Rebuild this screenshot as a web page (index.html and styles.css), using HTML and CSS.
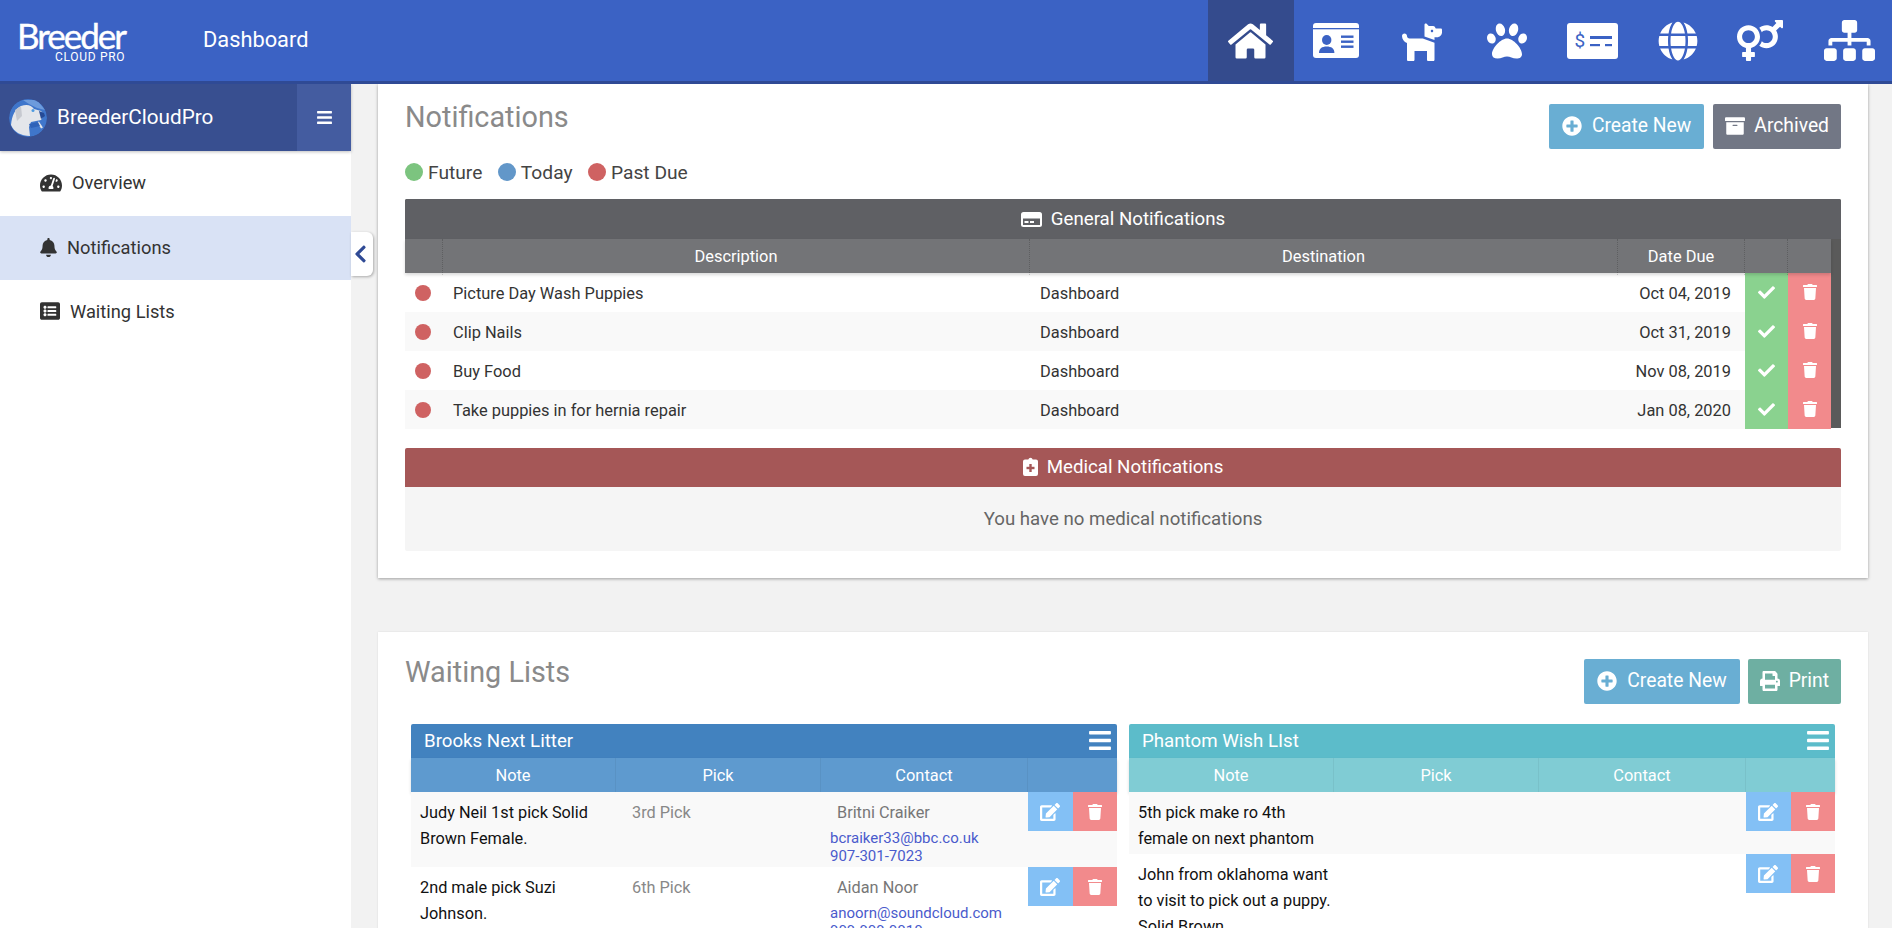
FILE: index.html
```html
<!DOCTYPE html>
<html lang="en">
<head>
<meta charset="utf-8">
<title>Breeder Cloud Pro - Dashboard</title>
<link rel="stylesheet" href="styles.css">
</head>
<body>
<svg class="sprite" aria-hidden="true">
  <symbol id="i-home" viewBox="0 0 576 512"><path d="M280.37 148.26L96 300.11V464a16 16 0 0 0 16 16l112.06-.29a16 16 0 0 0 15.92-16V368a16 16 0 0 1 16-16h64a16 16 0 0 1 16 16v95.64a16 16 0 0 0 16 16.05L464 480a16 16 0 0 0 16-16V300L295.67 148.26a12.19 12.19 0 0 0-15.3 0zM571.6 251.47L488 182.56V44.05a12 12 0 0 0-12-12h-56a12 12 0 0 0-12 12v72.61L318.47 43a48 48 0 0 0-61 0L4.34 251.47a12 12 0 0 0-1.6 16.9l25.5 31A12 12 0 0 0 45.15 301l235.22-193.74a12.19 12.19 0 0 1 15.3 0L530.9 301a12 12 0 0 0 16.9-1.6l25.5-31a12 12 0 0 0-1.7-16.93z"/></symbol>
  <symbol id="i-dog" viewBox="0 0 512 512"><path d="M496 96h-64l-7.16-14.31A32 32 0 0 0 396.22 64H342.6l-27.28-27.28C305.23 26.63 288 33.77 288 48.03v149.84l128 45.71V208h32c35.35 0 64-28.65 64-64v-32c0-8.84-7.16-16-16-16zm-112 48c-8.84 0-16-7.16-16-16s7.16-16 16-16 16 7.16 16 16-7.16 16-16 16zM96 224c-17.64 0-32-14.36-32-32 0-17.67-14.33-32-32-32S0 174.33 0 192c0 41.66 26.83 76.85 64 90.1V496c0 8.84 7.16 16 16 16h64c8.84 0 16-7.16 16-16V384h160v112c0 8.84 7.16 16 16 16h64c8.84 0 16-7.16 16-16V277.55L266.05 224H96z"/></symbol>
  <symbol id="i-paw" viewBox="0 0 512 512"><path d="M256 224c-79.41 0-192 122.76-192 200.25 0 34.9 26.81 55.75 71.74 55.75 48.84 0 81.09-25.08 120.26-25.08 39.51 0 71.85 25.08 120.26 25.08 44.93 0 71.74-20.85 71.74-55.75C448 346.76 335.41 224 256 224zm-147.28-12.61c-10.4-34.65-42.44-57.09-71.56-50.13-29.12 6.96-44.29 40.69-33.89 75.34 10.4 34.65 42.44 57.09 71.56 50.13 29.12-6.96 44.29-40.69 33.89-75.34zm84.72-20.78c30.94-8.14 46.42-49.94 34.58-93.36s-46.52-72.01-77.46-63.87-46.42 49.94-34.58 93.36c11.84 43.42 46.52 72.02 77.46 63.87zm281.39-29.34c-29.12-6.96-61.15 15.48-71.56 50.13-10.4 34.65 4.77 68.38 33.89 75.34 29.12 6.96 61.15-15.48 71.56-50.13 10.4-34.65-4.77-68.38-33.89-75.34zm-156.27 29.34c30.94 8.14 65.62-20.45 77.46-63.87 11.84-43.42-3.64-85.21-34.58-93.36s-65.62 20.45-77.46 63.87c-11.84 43.42 3.64 85.22 34.58 93.36z"/></symbol>
  <symbol id="i-globe" viewBox="0 0 496 512"><path d="M336.5 160C322 70.7 287.8 8 248 8s-74 62.7-88.5 152h177zM152 256c0 22.2 1.2 43.5 3.3 64h185.3c2.1-20.5 3.3-41.8 3.3-64s-1.2-43.5-3.3-64H155.3c-2.1 20.5-3.3 41.8-3.3 64zm324.7-96c-28.6-67.9-86.5-120.4-158-141.6 24.4 33.8 41.2 84.7 50 141.6h108zM177.2 18.4C105.8 39.6 47.8 92.1 19.3 160h108c8.7-56.9 25.5-107.8 49.9-141.6zM487.4 192H372.7c2.1 21 3.3 42.5 3.3 64s-1.2 43-3.3 64h114.6c5.5-20.5 8.6-41.8 8.6-64s-3.1-43.5-8.5-64zM120 256c0-21.5 1.2-43 3.3-64H8.6C3.2 212.5 0 233.8 0 256s3.2 43.5 8.6 64h114.6c-2-21-3.2-42.5-3.2-64zm39.5 96c14.5 89.3 48.7 152 88.5 152s74-62.7 88.5-152h-177zm159.3 141.6c71.4-21.2 129.4-73.7 158-141.6h-108c-8.8 56.9-25.6 107.8-50 141.6zM19.3 352c28.6 67.9 86.5 120.4 158 141.6-24.4-33.8-41.2-84.7-50-141.6h-108z"/></symbol>
  <symbol id="i-gender" viewBox="0 0 576 512"><path d="M564 0h-79c-10.7 0-16 12.9-8.5 20.5l16.9 16.9-48.7 48.7C422.5 72.1 396.2 64 368 64c-33.7 0-64.6 11.6-89.2 30.9 14 16.7 25 36 32.1 57.1 14.5-14.8 34.7-24 57.1-24 44.1 0 80 35.9 80 80s-35.9 80-80 80c-22.3 0-42.6-9.2-57.1-24-7.1 21.1-18 40.4-32.1 57.1 24.5 19.4 55.5 30.9 89.2 30.9 79.5 0 144-64.5 144-144 0-28.2-8.1-54.5-22.1-76.7l48.7-48.7 16.9 16.9c2.4 2.4 5.4 3.5 8.4 3.5 6.2 0 12.1-4.8 12.1-12V12c0-6.6-5.4-12-12-12zM144 64C64.5 64 0 128.5 0 208c0 68.5 47.9 125.9 112 140.4V400H76c-6.6 0-12 5.4-12 12v40c0 6.6 5.4 12 12 12h36v36c0 6.6 5.4 12 12 12h40c6.6 0 12-5.4 12-12v-36h36c6.6 0 12-5.4 12-12v-40c0-6.6-5.4-12-12-12h-36v-51.6c64.1-14.6 112-71.9 112-140.4 0-79.5-64.5-144-144-144zm0 224c-44.1 0-80-35.9-80-80s35.9-80 80-80 80 35.9 80 80-35.9 80-80 80z"/></symbol>
  <symbol id="i-sitemap" viewBox="0 0 640 512"><path d="M128 352H32c-17.67 0-32 14.33-32 32v96c0 17.67 14.33 32 32 32h96c17.67 0 32-14.33 32-32v-96c0-17.67-14.33-32-32-32zm-24-80h192v48h48v-48h192v48h48v-57.59c0-21.17-17.23-38.41-38.41-38.41H344v-64h40c17.67 0 32-14.33 32-32V32c0-17.67-14.33-32-32-32H256c-17.67 0-32 14.33-32 32v96c0 17.67 14.33 32 32 32h40v64H94.41C73.23 224 56 241.23 56 262.41V320h48v-48zm264 80h-96c-17.67 0-32 14.33-32 32v96c0 17.67 14.33 32 32 32h96c17.67 0 32-14.33 32-32v-96c0-17.67-14.33-32-32-32zm240 0h-96c-17.67 0-32 14.33-32 32v96c0 17.67 14.33 32 32 32h96c17.67 0 32-14.33 32-32v-96c0-17.67-14.33-32-32-32z"/></symbol>
  <symbol id="i-bars" viewBox="0 0 448 512"><path d="M16 132h416c8.837 0 16-7.163 16-16V76c0-8.837-7.163-16-16-16H16C7.163 60 0 67.163 0 76v40c0 8.837 7.163 16 16 16zm0 160h416c8.837 0 16-7.163 16-16v-40c0-8.837-7.163-16-16-16H16c-8.837 0-16 7.163-16 16v40c0 8.837 7.163 16 16 16zm0 160h416c8.837 0 16-7.163 16-16v-40c0-8.837-7.163-16-16-16H16c-8.837 0-16 7.163-16 16v40c0 8.837 7.163 16 16 16z"/></symbol>
  <symbol id="i-gauge" viewBox="0 0 576 512"><path d="M288 32C128.94 32 0 160.94 0 320c0 52.8 14.25 102.26 39.06 144.8 5.61 9.62 16.3 15.2 27.44 15.2h443c11.14 0 21.83-5.58 27.44-15.2C561.75 422.26 576 372.8 576 320c0-159.06-128.94-288-288-288zm0 64c14.71 0 26.58 10.13 30.32 23.65-1.11 2.26-2.64 4.23-3.45 6.67l-9.22 27.67c-5.13 3.49-10.97 6.01-17.64 6.01-17.67 0-32-14.33-32-32S270.33 96 288 96zM96 384c-17.67 0-32-14.33-32-32s14.33-32 32-32 32 14.33 32 32-14.33 32-32 32zm48-160c-17.67 0-32-14.33-32-32s14.33-32 32-32 32 14.33 32 32-14.33 32-32 32zm246.77-72.41l-61.33 184C343.13 347.33 352 364.54 352 384c0 11.72-3.38 22.55-8.88 32H232.88c-5.5-9.45-8.88-20.28-8.88-32 0-33.94 26.5-61.43 59.9-63.59l61.34-184.01c4.17-12.56 17.73-19.45 30.36-15.17 12.57 4.19 19.35 17.79 15.17 30.36zm14.66 57.2l15.52-46.55c3.47-1.29 7.13-2.23 11.05-2.23 17.67 0 32 14.33 32 32s-14.33 32-32 32c-11.38-.01-20.89-6.28-26.57-15.22zM480 384c-17.67 0-32-14.33-32-32s14.33-32 32-32 32 14.33 32 32-14.33 32-32 32z"/></symbol>
  <symbol id="i-bell" viewBox="0 0 448 512"><path d="M224 512c35.32 0 63.97-28.65 63.97-64H160.03c0 35.35 28.65 64 63.97 64zm215.39-149.71c-19.32-20.76-55.47-51.99-55.47-154.29 0-77.7-54.48-139.9-127.94-155.16V32c0-17.67-14.32-32-31.98-32s-31.98 14.33-31.98 32v20.84C118.56 68.1 64.08 130.3 64.08 208c0 102.3-36.15 133.53-55.47 154.29-6 6.45-8.66 14.16-8.61 21.71.11 16.4 12.98 32 32.1 32h383.8c19.12 0 32-15.6 32.1-32 .05-7.55-2.61-15.27-8.61-21.71z"/></symbol>
  <symbol id="i-list" viewBox="0 0 512 512"><path d="M464 480H48c-26.51 0-48-21.49-48-48V80c0-26.51 21.49-48 48-48h416c26.51 0 48 21.49 48 48v352c0 26.51-21.49 48-48 48zM128 120c-22.091 0-40 17.909-40 40s17.909 40 40 40 40-17.909 40-40-17.909-40-40-40zm0 96c-22.091 0-40 17.909-40 40s17.909 40 40 40 40-17.909 40-40-17.909-40-40-40zm0 96c-22.091 0-40 17.909-40 40s17.909 40 40 40 40-17.909 40-40-17.909-40-40-40zm288-136v-32c0-6.627-5.373-12-12-12H204c-6.627 0-12 5.373-12 12v32c0 6.627 5.373 12 12 12h200c6.627 0 12-5.373 12-12zm0 96v-32c0-6.627-5.373-12-12-12H204c-6.627 0-12 5.373-12 12v32c0 6.627 5.373 12 12 12h200c6.627 0 12-5.373 12-12zm0 96v-32c0-6.627-5.373-12-12-12H204c-6.627 0-12 5.373-12 12v32c0 6.627 5.373 12 12 12h200c6.627 0 12-5.373 12-12z"/></symbol>
  <symbol id="i-chevron" viewBox="0 0 320 512"><path d="M34.52 239.03L228.87 44.69c9.37-9.37 24.57-9.37 33.94 0l22.67 22.67c9.36 9.36 9.37 24.52.04 33.9L131.49 256l154.02 154.75c9.34 9.38 9.32 24.54-.04 33.9l-22.67 22.67c-9.37 9.37-24.57 9.37-33.94 0L34.52 272.97c-9.37-9.37-9.37-24.57 0-33.94z"/></symbol>
  <symbol id="i-plus" viewBox="0 0 512 512"><path d="M256 8C119 8 8 119 8 256s111 248 248 248 248-111 248-248S393 8 256 8zm144 276c0 6.6-5.4 12-12 12h-92v92c0 6.6-5.4 12-12 12h-56c-6.6 0-12-5.4-12-12v-92h-92c-6.6 0-12-5.4-12-12v-56c0-6.6 5.4-12 12-12h92v-92c0-6.6 5.4-12 12-12h56c6.6 0 12 5.4 12 12v92h92c6.6 0 12 5.4 12 12v56z"/></symbol>
  <symbol id="i-archive" viewBox="0 0 512 512"><path d="M32 448c0 17.7 14.3 32 32 32h384c17.7 0 32-14.3 32-32V160H32v288zm160-212c0-6.6 5.4-12 12-12h104c6.6 0 12 5.4 12 12v8c0 6.6-5.4 12-12 12H204c-6.6 0-12-5.4-12-12v-8zM480 32H32C14.3 32 0 46.3 0 64v48c0 8.8 7.2 16 16 16h480c8.8 0 16-7.2 16-16V64c0-17.7-14.3-32-32-32z"/></symbol>
  <symbol id="i-print" viewBox="0 0 512 512"><path d="M448 192V77.25c0-8.49-3.37-16.62-9.37-22.63L393.37 9.37c-6-6-14.14-9.37-22.63-9.37H96C78.33 0 64 14.33 64 32v160c-35.35 0-64 28.65-64 64v112c0 8.84 7.16 16 16 16h48v96c0 17.67 14.33 32 32 32h320c17.67 0 32-14.33 32-32v-96h48c8.84 0 16-7.16 16-16V256c0-35.35-28.65-64-64-64zm-64 256H128v-96h256v96zm0-224H128V64h192v48c0 8.84 7.16 16 16 16h48v96zm48 72c-13.25 0-24-10.75-24-24 0-13.26 10.75-24 24-24s24 10.74 24 24c0 13.25-10.75 24-24 24z"/></symbol>
  <symbol id="i-check" viewBox="0 0 512 512"><path d="M173.898 439.404l-166.4-166.4c-9.997-9.997-9.997-26.206 0-36.204l36.203-36.204c9.997-9.998 26.207-9.998 36.204 0L192 312.69 432.095 72.596c9.997-9.997 26.207-9.997 36.204 0l36.203 36.204c9.997 9.997 9.997 26.206 0 36.204l-294.4 294.401c-9.998 9.997-26.207 9.997-36.204-.001z"/></symbol>
  <symbol id="i-trash" viewBox="0 0 448 512"><path d="M432 32H312l-9.4-18.7A24 24 0 0 0 281.1 0H166.8a23.72 23.72 0 0 0-21.4 13.3L136 32H16A16 16 0 0 0 0 48v32a16 16 0 0 0 16 16h416a16 16 0 0 0 16-16V48a16 16 0 0 0-16-16zM53.2 467a48 48 0 0 0 47.9 45h245.8a48 48 0 0 0 47.9-45L416 128H32z"/></symbol>
  <symbol id="i-edit" viewBox="0 0 576 512"><path d="M402.6 83.2l90.2 90.2c3.8 3.8 3.8 10 0 13.8L274.4 405.6l-92.8 10.3c-12.4 1.4-22.9-9.1-21.5-21.5l10.3-92.8L388.8 83.2c3.8-3.8 10-3.8 13.8 0zm162-22.9l-48.8-48.8c-15.2-15.2-39.9-15.2-55.2 0l-35.4 35.4c-3.8 3.8-3.8 10 0 13.8l90.2 90.2c3.8 3.8 10 3.8 13.8 0l35.4-35.4c15.2-15.3 15.2-40 0-55.2zM384 346.2V448H64V128h229.8c3.2 0 6.2-1.3 8.5-3.5l40-40c7.6-7.6 2.2-20.5-8.5-20.5H48C21.5 64 0 85.5 0 112v352c0 26.5 21.5 48 48 48h352c26.5 0 48-21.5 48-48V306.2c0-10.7-12.9-16-20.5-8.5l-40 40c-2.2 2.3-3.5 5.3-3.5 8.5z"/></symbol>
</svg>

<header class="topbar">
  <div class="logo">
    <span class="logo-main">Breeder</span>
    <span class="logo-sub">CLOUD PRO</span>
  </div>
  <div class="page-name">Dashboard</div>
  <nav class="topnav">
    <a class="topnav-item is-active"><svg class="ic-home"><use href="#i-home"/></svg></a>
    <a class="topnav-item">
      <svg class="ic-idcard" viewBox="0 0 46 35">
        <rect width="46" height="35" rx="3" fill="#fff"/>
        <rect y="5" width="46" height="1.300" fill="#3b62c4"/>
        <ellipse cx="13.700" cy="17" rx="4.700" ry="5" fill="#3b62c4"/>
        <path d="M6 30c0-4.500 3-6.500 7.700-6.500s7.700 2 7.700 6.500z" fill="#3b62c4"/>
        <rect x="28" y="12.500" width="12.500" height="2.400" fill="#3b62c4"/>
        <rect x="28" y="17.500" width="12.500" height="2.400" fill="#3b62c4"/>
        <rect x="28" y="22.500" width="12.500" height="2.400" fill="#3b62c4"/>
      </svg>
    </a>
    <a class="topnav-item"><svg class="ic-40"><use href="#i-dog"/></svg></a>
    <a class="topnav-item"><svg class="ic-40"><use href="#i-paw"/></svg></a>
    <a class="topnav-item">
      <svg class="ic-money" viewBox="0 0 51 36">
        <rect width="51" height="36" rx="3" fill="#fff"/>
        <text x="7.500" y="24" class="ic-money-sign">$</text>
        <rect x="23" y="13" width="22" height="3" fill="#3b62c4"/>
        <rect x="23" y="21" width="10" height="2.200" fill="#3b62c4"/>
        <rect x="38" y="21" width="7" height="2.200" fill="#3b62c4"/>
      </svg>
    </a>
    <a class="topnav-item"><svg class="ic-40"><use href="#i-globe"/></svg></a>
    <a class="topnav-item"><svg class="ic-gender"><use href="#i-gender"/></svg></a>
    <a class="topnav-item"><svg class="ic-sitemap"><use href="#i-sitemap"/></svg></a>
  </nav>
</header>

<div class="layout">
  <aside class="sidebar">
    <div class="side-head">
      <div class="avatar">
        <svg viewBox="0 0 38 38" class="avatar-svg">
          <circle cx="19" cy="19" r="19" fill="#3f76cb"/>
          <path d="M14 1h14l8 10-8-2-8-4z" fill="#6d9bdc"/>
          <path d="M2 26C3 16 6 10 12 7c6-2 10-1 13 3l7 2 3 4-3 5-10 2-2 5 1 9c-9 0-16-4-19-11z" fill="#e4e6ea"/>
          <path d="M6 11l6-4 1 10-5 5z" fill="#c6c9d0"/>
          <circle cx="24" cy="11.500" r="1.500" fill="#4f9be0"/>
          <path d="M30 12l5 2 1 3-4 3z" fill="#254a96"/>
          <path d="M29 23l4 6" stroke="#e4e6ea" stroke-width="2.200" fill="none"/>
          <path d="M20 25l9-2 2 4-9 2z" fill="#2f62b8"/>
        </svg>
      </div>
      <span class="side-name">BreederCloudPro</span>
      <button class="side-toggle"><svg class="ic-side-bars"><use href="#i-bars"/></svg></button>
    </div>
    <ul class="side-menu">
      <li class="side-item side-item-first"><svg class="ic-gauge"><use href="#i-gauge"/></svg>Overview</li>
      <li class="side-item is-current"><svg class="ic-bell"><use href="#i-bell"/></svg>Notifications</li>
      <li class="side-item"><svg class="ic-list"><use href="#i-list"/></svg>Waiting Lists</li>
    </ul>
    <div class="side-tab"><svg class="ic-chevron"><use href="#i-chevron"/></svg></div>
  </aside>

  <main class="content">
    <section class="card card-notifications">
      <div class="card-head">
        <h2 class="card-title">Notifications</h2>
        <div class="btn-row">
          <a class="btn btn-blue"><svg class="ic-btn"><use href="#i-plus"/></svg>Create New</a>
          <a class="btn btn-gray"><svg class="ic-btn"><use href="#i-archive"/></svg>Archived</a>
        </div>
      </div>
      <div class="legend">
        <span class="legend-item"><i class="dot dot-lg dot-green"></i>Future</span>
        <span class="legend-item"><i class="dot dot-lg dot-blue"></i>Today</span>
        <span class="legend-item"><i class="dot dot-lg dot-red"></i>Past Due</span>
      </div>

      <div class="panel">
        <div class="panel-head panel-head-gray">
          <svg class="ic-general" viewBox="0 0 21 15">
            <rect width="21" height="15" rx="2.500" fill="#fff"/>
            <rect x="2" y="6.500" width="17" height="6.500" fill="#5f6064"/>
            <rect x="3.500" y="9" width="4" height="2" fill="#fff"/>
            <rect x="9" y="9" width="4" height="2" fill="#fff"/>
          </svg>
          General Notifications
        </div>
        <div class="ntable">
          <div class="nrow nrow-head">
            <div class="nth"></div>
            <div class="nth">Description</div>
            <div class="nth">Destination</div>
            <div class="nth">Date Due</div>
            <div class="nth"></div>
            <div class="nth"></div>
          </div>
          <div class="nrow">
            <div class="ntd ntd-dot"><i class="dot dot-red"></i></div>
            <div class="ntd">Picture Day Wash Puppies</div>
            <div class="ntd">Dashboard</div>
            <div class="ntd ntd-date">Oct 04, 2019</div>
            <div class="ntd ntd-ok"><svg class="ic-check"><use href="#i-check"/></svg></div>
            <div class="ntd ntd-del"><svg class="ic-trash"><use href="#i-trash"/></svg></div>
          </div>
          <div class="nrow">
            <div class="ntd ntd-dot"><i class="dot dot-red"></i></div>
            <div class="ntd">Clip Nails</div>
            <div class="ntd">Dashboard</div>
            <div class="ntd ntd-date">Oct 31, 2019</div>
            <div class="ntd ntd-ok"><svg class="ic-check"><use href="#i-check"/></svg></div>
            <div class="ntd ntd-del"><svg class="ic-trash"><use href="#i-trash"/></svg></div>
          </div>
          <div class="nrow">
            <div class="ntd ntd-dot"><i class="dot dot-red"></i></div>
            <div class="ntd">Buy Food</div>
            <div class="ntd">Dashboard</div>
            <div class="ntd ntd-date">Nov 08, 2019</div>
            <div class="ntd ntd-ok"><svg class="ic-check"><use href="#i-check"/></svg></div>
            <div class="ntd ntd-del"><svg class="ic-trash"><use href="#i-trash"/></svg></div>
          </div>
          <div class="nrow">
            <div class="ntd ntd-dot"><i class="dot dot-red"></i></div>
            <div class="ntd">Take puppies in for hernia repair</div>
            <div class="ntd">Dashboard</div>
            <div class="ntd ntd-date">Jan 08, 2020</div>
            <div class="ntd ntd-ok"><svg class="ic-check"><use href="#i-check"/></svg></div>
            <div class="ntd ntd-del"><svg class="ic-trash"><use href="#i-trash"/></svg></div>
          </div>
        </div>
      </div>

      <div class="panel-medical">
        <div class="panel-head panel-head-red">
          <svg class="ic-clip" viewBox="0 0 15 19">
            <path d="M2 2.500h3.300a2.300 2.300 0 0 1 4.400 0H13a2 2 0 0 1 2 2V17a2 2 0 0 1-2 2H2a2 2 0 0 1-2-2V4.500a2 2 0 0 1 2-2z" fill="#fff"/>
            <rect x="6.300" y="7" width="2.400" height="8" fill="#a55757"/>
            <rect x="3.500" y="9.800" width="8" height="2.400" fill="#a55757"/>
          </svg>
          Medical Notifications
        </div>
        <div class="panel-empty">You have no medical notifications</div>
      </div>
    </section>

    <section class="card card-lists">
      <div class="card-head">
        <h2 class="card-title">Waiting Lists</h2>
        <div class="btn-row">
          <a class="btn btn-blue"><svg class="ic-btn"><use href="#i-plus"/></svg>Create New</a>
          <a class="btn btn-teal"><svg class="ic-btn"><use href="#i-print"/></svg>Print</a>
        </div>
      </div>
      <div class="lists">
        <div class="wlist wlist-blue">
          <div class="wlist-title"><span>Brooks Next Litter</span><svg class="ic-wbars"><use href="#i-bars"/></svg></div>
          <div class="wrow wrow-head">
            <div class="wth">Note</div><div class="wth">Pick</div><div class="wth">Contact</div><div class="wth"></div>
          </div>
          <div class="wrow wrow-alt">
            <div class="wtd wtd-note">Judy Neil 1st pick Solid<br>Brown Female.</div>
            <div class="wtd wtd-pick">3rd Pick</div>
            <div class="wtd wtd-contact">
              <div class="contact-name">Britni Craiker</div>
              <a class="contact-link">bcraiker33@bbc.co.uk</a>
              <a class="contact-link">907-301-7023</a>
            </div>
            <div class="wactions">
              <span class="wbtn wbtn-edit"><svg class="ic-edit"><use href="#i-edit"/></svg></span>
              <span class="wbtn wbtn-del"><svg class="ic-trash"><use href="#i-trash"/></svg></span>
            </div>
          </div>
          <div class="wrow">
            <div class="wtd wtd-note">2nd male pick Suzi<br>Johnson.</div>
            <div class="wtd wtd-pick">6th Pick</div>
            <div class="wtd wtd-contact">
              <div class="contact-name">Aidan Noor</div>
              <a class="contact-link">anoorn@soundcloud.com</a>
              <a class="contact-link">909-909-0010</a>
            </div>
            <div class="wactions">
              <span class="wbtn wbtn-edit"><svg class="ic-edit"><use href="#i-edit"/></svg></span>
              <span class="wbtn wbtn-del"><svg class="ic-trash"><use href="#i-trash"/></svg></span>
            </div>
          </div>
        </div>

        <div class="wlist wlist-teal">
          <div class="wlist-title"><span>Phantom Wish LIst</span><svg class="ic-wbars"><use href="#i-bars"/></svg></div>
          <div class="wrow wrow-head">
            <div class="wth">Note</div><div class="wth">Pick</div><div class="wth">Contact</div><div class="wth"></div>
          </div>
          <div class="wrow wrow-alt">
            <div class="wtd wtd-note">5th pick make ro 4th<br>female on next phantom</div>
            <div class="wtd wtd-pick"></div>
            <div class="wtd wtd-contact"></div>
            <div class="wactions">
              <span class="wbtn wbtn-edit"><svg class="ic-edit"><use href="#i-edit"/></svg></span>
              <span class="wbtn wbtn-del"><svg class="ic-trash"><use href="#i-trash"/></svg></span>
            </div>
          </div>
          <div class="wrow">
            <div class="wtd wtd-note">John from oklahoma want<br>to visit to pick out a puppy.<br>Solid Brown.</div>
            <div class="wtd wtd-pick"></div>
            <div class="wtd wtd-contact"></div>
            <div class="wactions">
              <span class="wbtn wbtn-edit"><svg class="ic-edit"><use href="#i-edit"/></svg></span>
              <span class="wbtn wbtn-del"><svg class="ic-trash"><use href="#i-trash"/></svg></span>
            </div>
          </div>
        </div>
      </div>
    </section>
  </main>
</div>
</body>
</html>
```
FILE: styles.css
```css
* { box-sizing: border-box; }
html, body { height: 100%; }
body {
  margin: 0;
  overflow: hidden;
  font-family: Roboto, "Liberation Sans", Arial, sans-serif;
  font-size: 16px;
  color: #333;
  background: #f2f2f2;
  display: flex;
  flex-direction: column;
}
svg { fill: currentColor; display: block; flex: none; }
.sprite { width: 0; height: 0; position: absolute; }
a { color: inherit; text-decoration: none; }

/* top bar */
.topbar {
  flex: none;
  height: 84px;
  background: #3b62c4;
  border-bottom: 3px solid #2f4a95;
  color: #fff;
  display: flex;
  align-items: center;
  position: relative;
  z-index: 3;
}
.logo {
  width: 203px;
  padding-left: 17px;
  display: flex;
  flex-direction: column;
  align-items: flex-start;
}
.logo-main {
  font-family: Lato, sans-serif;
  font-size: 35px;
  line-height: 32px;
  letter-spacing: -2px;
  font-weight: 400;
  -webkit-text-stroke: .4px #fff;
}
.logo-sub {
  font-size: 12px;
  line-height: 12px;
  letter-spacing: .7px;
  margin-left: 38px;
}
.page-name { font-size: 21.8px; padding-bottom: 2px; }
.topnav { margin-left: auto; display: flex; height: 81px; }
.topnav-item {
  width: 85.5px;
  display: flex;
  align-items: center;
  justify-content: center;
  color: #fff;
}
.topnav-item.is-active { background: #344b8d; }
.ic-home { width: 45px; height: 40px; }
.ic-idcard { width: 46px; height: 35px; }
.ic-40 { width: 40px; height: 40px; }
.ic-money { width: 51px; height: 36px; }
.ic-money-sign { font-family: Roboto, sans-serif; font-size: 19px; fill: #3b62c4; }
.ic-gender { width: 46px; height: 41px; margin-right: 7.5px; }
.ic-sitemap { width: 51px; height: 41px; }

/* layout */
.layout { flex: 1; display: flex; min-height: 0; }
.sidebar { width: 351px; flex: none; background: #fff; position: relative; }
.side-head {
  height: 67px;
  background: #384f90;
  color: #fff;
  display: flex;
  align-items: center;
  padding-left: 9px;
  box-shadow: 0 1px 3px rgba(0, 0, 0, .25);
}
.avatar { width: 38px; height: 38px; }
.avatar-svg { width: 38px; height: 38px; border-radius: 50%; }
.side-name { margin-left: 10px; font-size: 20.7px; flex: 1; padding-bottom: 1px; }
.side-toggle {
  width: 54px;
  height: 67px;
  border: 0;
  padding: 0;
  background: #445ca0;
  color: #fff;
  display: flex;
  align-items: center;
  justify-content: center;
}
.ic-side-bars { width: 15px; height: 17px; }
.side-menu { list-style: none; margin: 0; padding: 0; }
.side-item {
  height: 64px;
  display: flex;
  align-items: center;
  padding: 0 0 2px 40px;
  font-size: 18.3px;
  color: #333;
}
.side-item-first { height: 65px; }
.side-item.is-current { background: #d9e2f5; }
.ic-gauge { width: 22px; height: 20px; margin-right: 10px; }
.ic-bell { width: 17px; height: 19px; margin-right: 10px; }
.ic-list { width: 20px; height: 20px; margin-right: 10px; }
.side-tab {
  position: absolute;
  left: 351px;
  top: 148px;
  width: 22px;
  height: 44px;
  background: #fff;
  border-radius: 0 6px 6px 0;
  box-shadow: 1px 1px 3px rgba(0, 0, 0, .3);
  color: #2f4a95;
  display: flex;
  align-items: center;
  justify-content: center;
  padding-right: 3px;
}
.ic-chevron { width: 13px; height: 20px; }

/* content */
.content { flex: 1; min-width: 0; padding: 0 24px 0 27px; overflow: hidden; }
.card {
  background: #fff;
  padding: 20px 27px 27px;
  box-shadow: 0 1px 3px rgba(0, 0, 0, .35);
}
.card-notifications { height: 494px; }
.card-lists { margin-top: 54px; padding-top: 27px; box-shadow: 0 0 2px rgba(0, 0, 0, .1); }
.card-head { display: flex; justify-content: space-between; align-items: flex-start; height: 45px; }
.card-title { margin: 0; font-size: 28.8px; line-height: 26px; font-weight: 400; color: #8a8a8a; }
.btn-row { display: flex; gap: 9px; }
.card-lists .btn-row { gap: 8px; }
.btn {
  height: 45px;
  padding: 0 13px 2px;
  border-radius: 2px;
  color: #fff;
  font-size: 19.3px;
  display: flex;
  align-items: center;
  gap: 10px;
}
.btn-blue { background: #69aed3; }
.btn-gray { background: #727785; padding: 0 12px 2px; gap: 9px; }
.btn-teal { background: #6eafa2; padding: 0 12px 2px; gap: 9px; }
.ic-btn { width: 20px; height: 20px; }

.legend { height: 50px; display: flex; align-items: center; gap: 15.5px; font-size: 19.2px; padding-bottom: 4px; color: #444; }
.legend-item { display: flex; align-items: center; gap: 5px; }
.dot { display: block; width: 16px; height: 16px; border-radius: 50%; }
.dot-lg { width: 18px; height: 18px; }
.dot-green { background: #7cc47f; }
.dot-blue { background: #6297c9; }
.dot-red { background: #cf6262; }

/* notifications table */
.panel { background: #5a5a5a; height: 229px; border-radius: 2px 2px 0 0; }
.panel-head {
  height: 40px;
  color: #fff;
  font-size: 18.7px;
  display: flex;
  align-items: center;
  justify-content: center;
  gap: 9px;
  border-radius: 2px 2px 0 0;
  padding-bottom: 2px;
}
.panel-head-gray { background: #5f6064; padding-bottom: 0; }
.panel-head-red { background: #a55757; height: 39px; }
.ic-general { width: 21px; height: 15px; }
.ic-clip { width: 15px; height: 19px; }
.ntable { width: 1426px; background: #fff; }
.nrow { display: grid; grid-template-columns: 38px 587px 588px 127px 43px 43px; height: 39px; }
.nrow:nth-child(odd) { background: #f9f9f9; }
.nrow-head, .nrow-head:nth-child(odd) {
  height: 34px;
  background: #737477;
  color: #fff;
  box-shadow: 0 2px 3px rgba(0, 0, 0, .15);
  position: relative;
}
.nth {
  font-size: 16.4px;
  text-align: center;
  line-height: 36px;
  border-right: 1px dotted rgba(0, 0, 0, .18);
}
.nth:last-child { border-right: 0; }
.ntd {
  font-size: 16.4px;
  color: #333;
  padding: 1px 10px 0;
  display: flex;
  align-items: center;
}
.ntd-dot { padding: 0 0 0 10px; }
.ntd-date { justify-content: flex-end; padding-right: 14px; }
.ntd-ok, .ntd-del { padding: 0 0 1px; justify-content: center; color: #fff; }
.ntd-ok { background: #8ad28f; }
.ntd-del { background: #f28a8c; }
.ic-check { width: 17px; height: 17px; }
.ic-trash { width: 14px; height: 16px; }

.panel-medical { margin-top: 20px; }
.panel-empty {
  height: 64px;
  background: #f5f5f5;
  color: #666;
  font-size: 18.65px;
  display: flex;
  align-items: center;
  justify-content: center;
  border-radius: 0 0 2px 2px;
}

/* waiting lists */
.lists { display: grid; grid-template-columns: 706px 706px; gap: 12px; padding: 20px 6px 0; }
.wlist-title {
  height: 34px;
  color: #fff;
  font-size: 18.7px;
  display: flex;
  align-items: center;
  justify-content: space-between;
  padding: 0 6px 1px 13px;
  border-radius: 2px 2px 0 0;
}
.wlist-blue .wlist-title { background: #4282bf; }
.wlist-teal .wlist-title { background: #5cbcca; }
.ic-wbars { width: 22px; height: 25px; }
.wrow { display: grid; grid-template-columns: 205px 205px 207px 89px; font-size: 16.3px; position: relative; }
.wrow-alt { background: #f9f9f9; }
.wrow-head { height: 34px; color: #fff; box-shadow: 0 2px 3px rgba(0, 0, 0, .15); }
.wlist-blue .wrow-head { background: #5e9acf; }
.wlist-teal .wrow-head { background: #80ccd4; }
.wth { font-size: 16.4px; line-height: 36px; text-align: center; border-right: 1px solid rgba(0, 0, 0, .05); }
.wth:last-child { border-right: 0; }
.wtd { padding-top: 8px; padding-bottom: 2px; line-height: 26px; }
.wtd-note { padding-left: 9px; color: #111; white-space: nowrap; }
.wtd-pick { padding-left: 16px; color: #888; }
.wtd-contact { padding-left: 9px; color: #777; }
.contact-name { padding-left: 7px; margin-bottom: 3px; }
.contact-link { display: block; line-height: 18px; color: #4a5bcc; font-size: 15px; }
.wactions { display: flex; height: 39px; }
.wbtn { flex: 1; display: flex; align-items: center; justify-content: center; color: #fff; }
.wbtn-edit { background: #83c0f5; }
.wbtn-del { background: #f28a8c; }
.ic-edit { width: 20px; height: 18px; }
```
